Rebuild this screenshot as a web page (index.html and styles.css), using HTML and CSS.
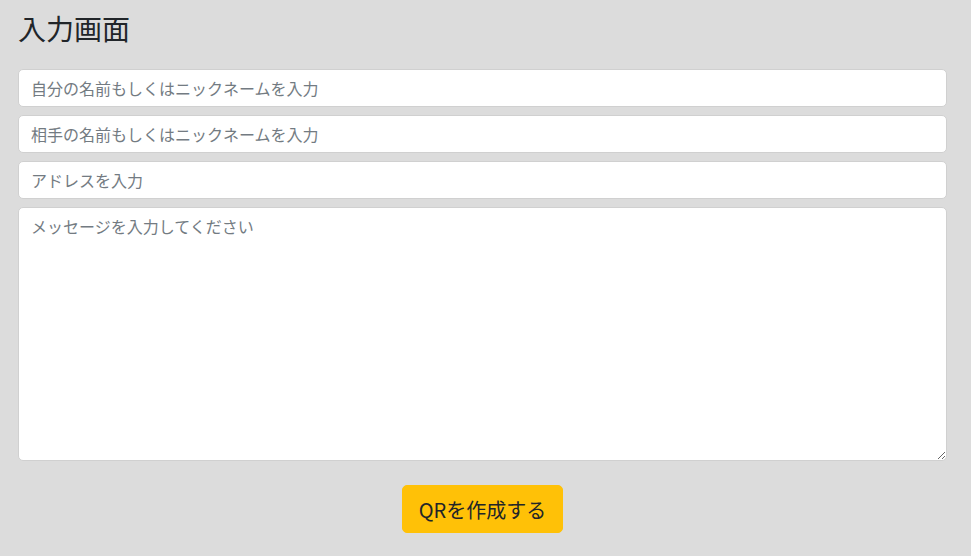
FILE: index.html
```html
<!DOCTYPE html>
<html lang="ja">
<head>
<meta charset="utf-8">
<link rel="stylesheet" href="styles.css">
</head>
<body>
<div class="page">
  <h1 class="title">入力画面</h1>
  <form class="form">
    <input class="field" type="text" placeholder="自分の名前もしくはニックネームを入力">
    <input class="field" type="text" placeholder="相手の名前もしくはニックネームを入力">
    <input class="field" type="text" placeholder="アドレスを入力">
    <textarea class="field area" placeholder="メッセージを入力してください"></textarea>
    <div class="actions">
      <button class="btn" type="button">QRを作成する</button>
    </div>
  </form>
</div>
</body>
</html>
```
FILE: styles.css
```css
html, body {
  margin: 0;
  padding: 0;
  background: #dcdcdc;
}
body {
  font-family: "Noto Sans CJK JP", "Noto Sans", sans-serif;
  color: #212529;
}
.page {
  padding: 8px 24px 0 18px;
}
.title {
  margin: 0 0 21px 0;
  font-size: 28px;
  font-weight: 400;
  line-height: 40px;
}
.form {
  display: flex;
  flex-direction: column;
  gap: 8px;
}
.field {
  display: block;
  box-sizing: border-box;
  width: 100%;
  height: 38px;
  margin: 0;
  padding: 6px 12px;
  font-family: inherit;
  font-size: 16px;
  line-height: 24px;
  color: #212529;
  background: #fff;
  border: 1px solid #d0d0d0;
  border-radius: 5px;
}
.field::placeholder {
  color: #737b82;
}
.area {
  height: 254px;
  resize: vertical;
}
.actions {
  display: flex;
  justify-content: center;
  padding-top: 16px;
}
.btn {
  width: 161px;
  height: 48px;
  font-family: inherit;
  font-size: 20px;
  color: #212529;
  background: #ffc107;
  border: 1px solid #ffc107;
  border-radius: 5px;
  padding: 0;
}
```
